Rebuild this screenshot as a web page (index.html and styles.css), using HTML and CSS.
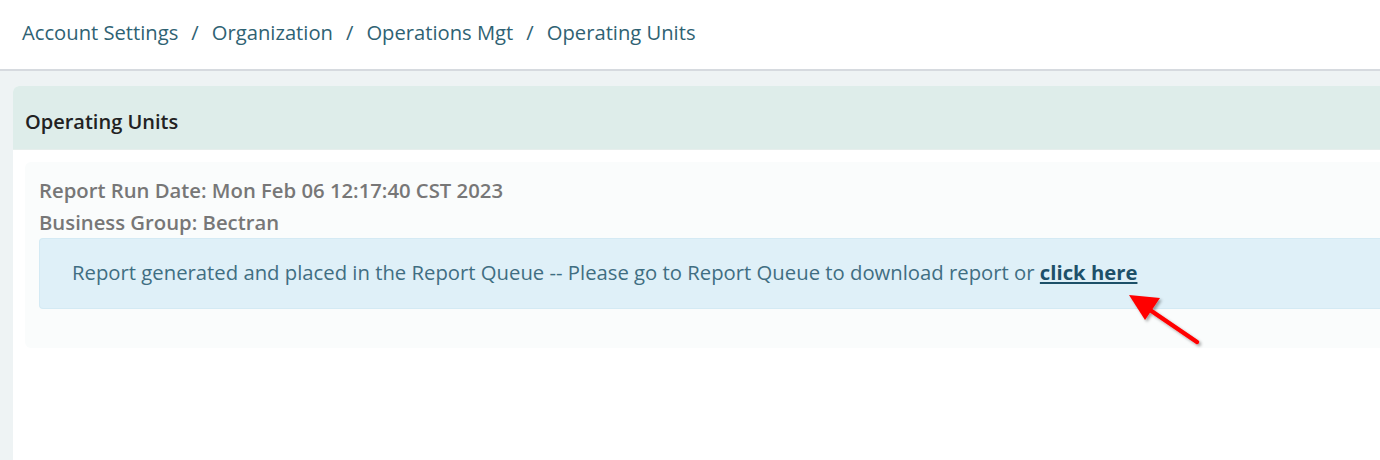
FILE: index.html
```html
<!DOCTYPE html>
<html lang="en">
<head>
    <meta charset="UTF-8">
    <title>Operating Units</title>
    <link rel="stylesheet" href="styles.css">
</head>
<body>
    <div class="topbar">
        <nav class="breadcrumb">
            <a href="#">Account Settings</a>
            <span class="sep">/</span>
            <a href="#">Organization</a>
            <span class="sep">/</span>
            <a href="#">Operations Mgt</a>
            <span class="sep">/</span>
            <span class="current">Operating Units</span>
        </nav>
    </div>

    <div class="content">
        <div class="panel">
            <div class="panel-heading">Operating Units</div>
            <div class="panel-body">
                <div class="report-box">
                    <div class="report-meta">Report Run Date: Mon Feb 06 12:17:40 CST 2023</div>
                    <div class="report-meta">Business Group: Bectran</div>
                    <div class="alert-info">
                        Report generated and placed in the Report Queue -- Please go to Report Queue to download report or
                        <a href="#" class="alert-link">click here</a>
                    </div>
                </div>
            </div>
        </div>
    </div>

    <!-- annotation arrow -->
    <svg class="callout-arrow" width="110" height="80" viewBox="0 0 110 80">
        <defs>
            <filter id="shadow" x="-20%" y="-20%" width="140%" height="140%">
                <feDropShadow dx="2" dy="2" stdDeviation="1.5" flood-color="#000" flood-opacity="0.35"/>
            </filter>
        </defs>
        <g filter="url(#shadow)">
            <line x1="77" y1="52" x2="30" y2="20" stroke="#f00" stroke-width="4.5" stroke-linecap="round"/>
            <polygon points="9,5 40,8 25,30" fill="#f00"/>
        </g>
    </svg>
</body>
</html>
```

FILE: styles.css
```css
* {
    margin: 0;
    padding: 0;
    box-sizing: border-box;
}

body {
    font-family: 'Open Sans', 'Noto Sans', sans-serif;
    background: #eef3f4;
    height: 460px;
    overflow: hidden;
    position: relative;
}

.topbar {
    background: #fff;
    height: 71px;
    border-bottom: 2px solid #d6dadf;
    padding: 18px 22px 0 22px;
}

.breadcrumb {
    font-size: 20.2px;
    color: #2f6273;
}

.breadcrumb a {
    color: #2f6273;
    text-decoration: none;
}

.breadcrumb .sep {
    margin: 0 7.8px;
}

.content {
    padding: 15px 0 0 13px;
}

.panel {
    margin-right: -20px;
    background: #fff;
    border-radius: 6px 6px 0 0;
    height: 380px;
}

.panel-heading {
    background: #deedea;
    height: 64px;
    border-radius: 6px 6px 0 0;
    border-bottom: 1px solid #e6eeec;
    padding: 22px 12px 0 12px;
    font-size: 20px;
    font-weight: 600;
    color: #222;
}

.panel-body {
    padding: 12px 0 0 12px;
}

.report-box {
    background: #fafcfc;
    border-radius: 6px;
    height: 186px;
    padding: 12px 0 0 14px;
}

.report-meta {
    font-size: 20.3px;
    font-weight: 600;
    color: #777;
    line-height: 32px;
}

.alert-info {
    background: #dff0f8;
    border: 1px solid #d4eaf4;
    border-right: none;
    border-radius: 4px 0 0 4px;
    height: 71px;
    padding: 19px 0 0 32px;
    font-size: 20.3px;
    color: #3f6e82;
}

.alert-link {
    font-weight: 700;
    color: #1d5069;
    text-decoration: underline;
}

.callout-arrow {
    position: absolute;
    left: 1120px;
    top: 290px;
}
```
